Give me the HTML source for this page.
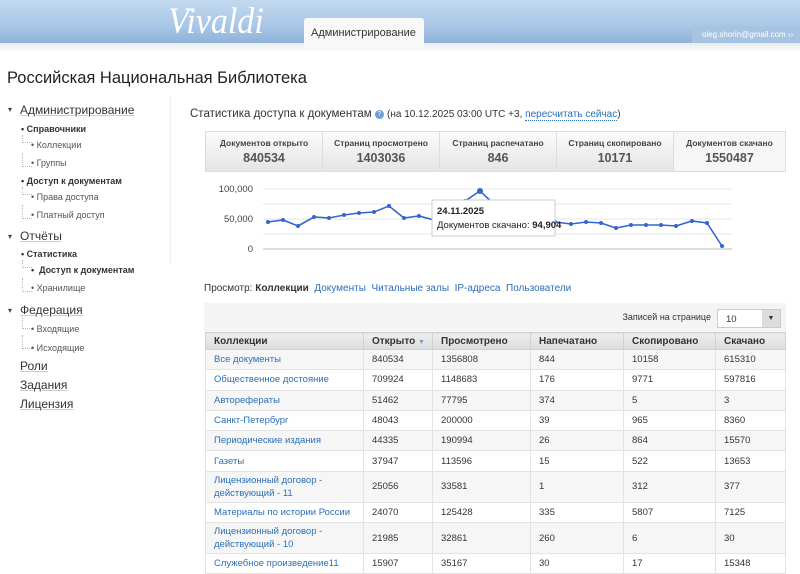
<!DOCTYPE html>
<html><head><meta charset="utf-8">
<style>
*{margin:0;padding:0;box-sizing:border-box}
body{width:800px;height:572px;overflow:hidden;background:#fff;font-family:"Liberation Sans",sans-serif;color:#333;position:relative}
.a{position:absolute}
.hdr{left:0;top:0;width:800px;height:43px;background:linear-gradient(#c2d9ef,#a9c7e6 60%,#8fb2d8)}
.sub{left:0;top:43px;width:800px;height:10px;background:linear-gradient(#e9ecef,#fff)}
.logo{left:168px;top:0px;font-family:"Liberation Serif",serif;font-style:italic;font-size:37px;color:#fff;transform:scaleX(0.92);transform-origin:left}
.tab{left:304px;top:18px;width:120px;height:30px;background:#f8f8f8;border-radius:3px 3px 0 0;font-size:11px;color:#333;padding:9px 0 0 7px;white-space:nowrap}
.user{left:692px;top:26px;width:108px;height:17px;background:#a7c3e2;font-size:8px;color:#fff;padding:4px 0 0 10px;white-space:nowrap}
h1{position:absolute;left:7px;top:69px;font-weight:normal;font-size:16.5px;color:#222;font-family:"Liberation Sans",sans-serif}
.s1{font-size:12px;text-decoration:underline;text-decoration-color:#ccc}
.s2{font-size:9px;font-weight:bold}
.s3{font-size:9px;color:#555}
.tri{font-size:8px;color:#444}
.dl{border-left:1px dotted #bbb;border-bottom:1px dotted #bbb;width:10px;height:8px}
.box{top:131px;height:41px;border:1px solid #ddd;background:linear-gradient(#fbfbfb,#e5e5e5);text-align:center}
.box b{display:block;font-size:8.5px;color:#444;margin-top:6px}
.box i{display:block;font-style:normal;font-weight:bold;font-size:12.5px;color:#555;margin-top:3px}
.lk{color:#2a6fb8}
table{position:absolute;left:205px;top:332px;width:581px;border-collapse:collapse;font-size:9.5px}
th{height:17px;text-align:left;padding-left:8px;background:linear-gradient(#eee,#dcdcdc);border:1px solid #d0d0d0;font-size:10px;color:#333}
td{height:20.3px;padding-left:8px;border:1px solid #e3e3e3;color:#333}
tr:nth-child(even) td{background:#f6f6f6}
td:first-child{color:#2a6fb8}
td.t{height:31px;line-height:13px}
</style></head><body>
<div class="a hdr"></div><div class="a sub"></div>
<div class="a logo">Vivaldi</div>
<div class="a tab">Администрирование</div>
<div class="a user">oleg.shorin@gmail.com ››</div>
<h1>Российская Национальная Библиотека</h1>
<div class="a" style="left:170px;top:95px;width:1px;height:170px;background:#eee"></div>
<div class="a" style="left:0;top:95px;width:170px">
<div class="a tri" style="left:8px;top:10px">▾</div><div class="a s1" style="left:20px;top:8px">Администрирование</div>
<div class="a s2" style="left:21px;top:29px">•&nbsp;Справочники</div>
<div class="a dl" style="left:22px;top:40px"></div><div class="a s3" style="left:31px;top:45px">• Коллекции</div>
<div class="a dl" style="left:22px;top:58px;height:14px"></div><div class="a s3" style="left:31px;top:63px">• Группы</div>
<div class="a s2" style="left:21px;top:81px">•&nbsp;Доступ к документам</div>
<div class="a dl" style="left:22px;top:92px"></div><div class="a s3" style="left:31px;top:97px">• Права доступа</div>
<div class="a dl" style="left:22px;top:110px;height:14px"></div><div class="a s3" style="left:31px;top:115px">• Платный доступ</div>
<div class="a tri" style="left:8px;top:137px">▾</div><div class="a s1" style="left:20px;top:134px">Отчёты</div>
<div class="a s2" style="left:21px;top:154px">•&nbsp;Статистика</div>
<div class="a dl" style="left:22px;top:165px"></div><div class="a s2" style="left:31px;top:170px">•&nbsp;&nbsp;Доступ к документам</div>
<div class="a dl" style="left:22px;top:183px;height:14px"></div><div class="a s3" style="left:31px;top:188px">• Хранилище</div>
<div class="a tri" style="left:8px;top:211px">▾</div><div class="a s1" style="left:20px;top:208px">Федерация</div>
<div class="a dl" style="left:22px;top:222px;height:12px"></div><div class="a s3" style="left:31px;top:229px">• Входящие</div>
<div class="a dl" style="left:22px;top:240px;height:14px"></div><div class="a s3" style="left:31px;top:248px">• Исходящие</div>
<div class="a s1" style="left:20px;top:264px">Роли</div>
<div class="a s1" style="left:20px;top:283px">Задания</div>
<div class="a s1" style="left:20px;top:302px">Лицензия</div>
</div>
<div class="a" style="left:190px;top:108px;font-size:11.5px;color:#333;white-space:nowrap">Статистика доступа к документам <span style="display:inline-block;width:9px;height:9px;border-radius:50%;background:#6a9fd6;color:#fff;font-size:7px;text-align:center;line-height:9px;vertical-align:1px">?</span> <span style="font-size:10px">(на 10.12.2025 03:00 UTC +3, <span class="lk" style="border-bottom:1px dotted #2a6fb8">пересчитать сейчас</span>)</span></div>
<div class="a box" style="left:205px;width:118px"><b>Документов открыто</b><i>840534</i></div>
<div class="a box" style="left:322px;width:118px"><b>Страниц просмотрено</b><i>1403036</i></div>
<div class="a box" style="left:439px;width:118px"><b>Страниц распечатано</b><i>846</i></div>
<div class="a box" style="left:556px;width:118px"><b>Страниц скопировано</b><i>10171</i></div>
<div class="a box" style="left:673px;width:113px;background:#f6f6f6"><b>Документов скачано</b><i>1550487</i></div>
<svg class="a" style="left:190px;top:180px" width="600" height="80" viewBox="190 180 600 80">
<g stroke="#e5e5e5"><line x1="263" y1="189" x2="732" y2="189"/><line x1="263" y1="204" x2="732" y2="204"/><line x1="263" y1="219" x2="732" y2="219"/><line x1="263" y1="234" x2="732" y2="234"/></g>
<line x1="263" y1="249" x2="732" y2="249" stroke="#bbb"/>
<g font-family="Liberation Sans,sans-serif" font-size="9.5" fill="#444" text-anchor="end"><text x="253" y="192">100,000</text><text x="253" y="222">50,000</text><text x="253" y="252">0</text></g>
<polyline fill="none" stroke="#3366cc" stroke-width="1.6" points="268,222 283,220 298,226 314,217 329,218 344,215 359,213 374,212 389,206 404,218 419,216 434,220 450,218 465,201 480,191 495,205 510,204 525,215 540,220 555,222 571,224 586,222 601,223 616,228 631,225 646,225 661,225 676,226 692,221 707,223 722,246"/>
<g fill="#3366cc"><circle cx="268" cy="222" r="2"/><circle cx="283" cy="220" r="2"/><circle cx="298" cy="226" r="2"/><circle cx="314" cy="217" r="2"/><circle cx="329" cy="218" r="2"/><circle cx="344" cy="215" r="2"/><circle cx="359" cy="213" r="2"/><circle cx="374" cy="212" r="2"/><circle cx="389" cy="206" r="2"/><circle cx="404" cy="218" r="2"/><circle cx="419" cy="216" r="2"/><circle cx="465" cy="201" r="2"/><circle cx="480" cy="191" r="3"/><circle cx="510" cy="204" r="2"/><circle cx="555" cy="222" r="2"/><circle cx="571" cy="224" r="2"/><circle cx="586" cy="222" r="2"/><circle cx="601" cy="223" r="2"/><circle cx="616" cy="228" r="2"/><circle cx="631" cy="225" r="2"/><circle cx="646" cy="225" r="2"/><circle cx="661" cy="225" r="2"/><circle cx="676" cy="226" r="2"/><circle cx="692" cy="221" r="2"/><circle cx="707" cy="223" r="2"/><circle cx="722" cy="246" r="2"/></g>
<rect x="432" y="200" width="123" height="36" fill="#fff" stroke="#ccc"/>
<text x="437" y="214" font-family="Liberation Sans,sans-serif" font-size="9.5" font-weight="bold" fill="#222">24.11.2025</text>
<text x="437" y="228" font-family="Liberation Sans,sans-serif" font-size="9.5" fill="#222">Документов скачано: <tspan font-weight="bold">94,904</tspan></text>
</svg>
<div class="a" style="left:204px;top:283px;font-size:10px;color:#333;white-space:nowrap">Просмотр: <b>Коллекции</b>&nbsp; <span class="lk">Документы</span>&nbsp; <span class="lk">Читальные залы</span>&nbsp; <span class="lk">IP-адреса</span>&nbsp; <span class="lk">Пользователи</span></div>
<div class="a" style="left:204px;top:303px;width:582px;height:29px;background:#f4f4f4"></div>
<div class="a" style="left:600px;top:312px;width:111px;text-align:right;font-size:9px;color:#333;white-space:nowrap">Записей на странице</div>
<div class="a" style="left:717px;top:309px;width:64px;height:19px;border:1px solid #ccc;background:#fff;font-size:9.5px;padding:4px 0 0 8px">10<span style="position:absolute;right:0;top:0;width:18px;height:17px;background:#ddd;font-size:7px;text-align:center;line-height:17px">▼</span></div>
<table>
<tr><th style="width:158px">Коллекции</th><th style="width:69px">Открыто <span style="color:#6a9fd6;font-size:7px">▼</span></th><th style="width:98px">Просмотрено</th><th style="width:93px">Напечатано</th><th style="width:92px">Скопировано</th><th>Скачано</th></tr>
<tr><td>Все документы</td><td>840534</td><td>1356808</td><td>844</td><td>10158</td><td>615310</td></tr>
<tr><td>Общественное достояние</td><td>709924</td><td>1148683</td><td>176</td><td>9771</td><td>597816</td></tr>
<tr><td>Авторефераты</td><td>51462</td><td>77795</td><td>374</td><td>5</td><td>3</td></tr>
<tr><td>Санкт-Петербург</td><td>48043</td><td>200000</td><td>39</td><td>965</td><td>8360</td></tr>
<tr><td>Периодические издания</td><td>44335</td><td>190994</td><td>26</td><td>864</td><td>15570</td></tr>
<tr><td>Газеты</td><td>37947</td><td>113596</td><td>15</td><td>522</td><td>13653</td></tr>
<tr><td class="t">Лицензионный договор - действующий - 11</td><td>25056</td><td>33581</td><td>1</td><td>312</td><td>377</td></tr>
<tr><td>Материалы по истории России</td><td>24070</td><td>125428</td><td>335</td><td>5807</td><td>7125</td></tr>
<tr><td class="t">Лицензионный договор - действующий - 10</td><td>21985</td><td>32861</td><td>260</td><td>6</td><td>30</td></tr>
<tr><td>Служебное произведение11</td><td>15907</td><td>35167</td><td>30</td><td>17</td><td>15348</td></tr>
</table>
</body></html>
